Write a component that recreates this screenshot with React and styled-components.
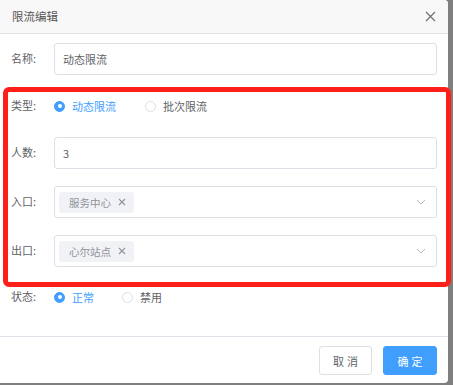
import React from "react";
import styled, { createGlobalStyle } from "styled-components";

const Global = createGlobalStyle`
  html, body { margin: 0; padding: 0; }
  body {
    background: #7f7f7f;
    font-family: "Noto Sans CJK SC", "Noto Sans", sans-serif;
    width: 453px;
    height: 385px;
    overflow: hidden;
  }
`;

const Dialog = styled.div`
  position: relative;
  width: 448px;
  height: 383px;
  background: #fff;
  border-radius: 0 4px 4px 0;
  display: flex;
  flex-direction: column;
  box-sizing: border-box;
`;

const Header = styled.div`
  height: 34px;
  box-sizing: border-box;
  background: #f8f8f8;
  border-bottom: 1px solid #e2e2ea;
  border-radius: 0 4px 0 0;
  padding: 0 12px 0 12px;
  display: flex;
  align-items: center;
  justify-content: space-between;
`;

const Title = styled.div`
  font-size: 11.5px;
  color: #555;
  line-height: 1;
`;

const Close = styled.svg`
  width: 11px;
  height: 11px;
`;

const Body = styled.div`
  padding: 9px 11px 0 11px;
  display: flex;
  flex-direction: column;
`;

const Item = styled.div`
  display: flex;
  align-items: center;
  height: ${(p) => p.$h || 32}px;
  margin-bottom: ${(p) => (p.$mb === undefined ? 17 : p.$mb)}px;
`;

const Label = styled.div`
  width: 43px;
  flex: none;
  font-size: 11px;
  color: #606266;
  margin-top: -3px;
`;

const Input = styled.div`
  flex: 1;
  height: 32px;
  box-sizing: border-box;
  border: 1px solid #dcdfe6;
  border-radius: 3px;
  padding: 0 8px;
  display: flex;
  align-items: center;
  font-size: 11px;
  color: #606266;
`;

const Select = styled(Input)`
  padding: 0 10px 0 4px;
  justify-content: space-between;
`;

const Tag = styled.span`
  display: inline-flex;
  align-items: center;
  height: 21px;
  padding: 0 8px 0 10px;
  background: #f0f2f5;
  border-radius: 3px;
  font-size: 10.5px;
  color: #909399;
  gap: 7px;
`;

const Radio = styled.label`
  display: inline-flex;
  align-items: center;
  margin-right: ${(p) => p.$mr || 0}px;
  font-size: 11px;
  color: ${(p) => (p.$on ? "#409eff" : "#606266")};
`;

const Dot = styled.span`
  width: 11px;
  height: 11px;
  box-sizing: border-box;
  border-radius: 50%;
  border: 1px solid ${(p) => (p.$on ? "#409eff" : "#dcdfe6")};
  background: ${(p) => (p.$on ? "#409eff" : "#fff")};
  display: inline-flex;
  align-items: center;
  justify-content: center;
  margin-right: 7px;
  &::after {
    content: "";
    width: 4px;
    height: 4px;
    border-radius: 50%;
    background: #fff;
    display: ${(p) => (p.$on ? "block" : "none")};
  }
`;

const Footer = styled.div`
  margin-top: auto;
  border-top: 1px solid #e2e2ea;
  height: 47px;
  box-sizing: border-box;
  padding: 9px 11px 0 0;
  display: flex;
  justify-content: flex-end;
  align-items: flex-start;
  gap: 11px;
`;

const Button = styled.button`
  width: ${(p) => p.$w}px;
  height: 29px;
  box-sizing: border-box;
  border-radius: 3px;
  font-family: inherit;
  font-size: 11px;
  letter-spacing: 3px;
  padding: 0 0 0 3px;
  border: 1px solid ${(p) => (p.$primary ? "#409eff" : "#dcdfe6")};
  background: ${(p) => (p.$primary ? "#409eff" : "#fff")};
  color: ${(p) => (p.$primary ? "#fff" : "#606266")};
`;

const Highlight = styled.div`
  position: absolute;
  left: 3px;
  top: 87px;
  width: 448px;
  height: 200px;
  box-sizing: border-box;
  border: 5px solid #ff1f1a;
  border-radius: 6px;
  pointer-events: none;
`;

const Chevron = () => (
  <svg width="10" height="6" viewBox="0 0 10 6">
    <path d="M1 1 L5 5 L9 1" fill="none" stroke="#b4b7bd" strokeWidth="1" />
  </svg>
);

const TagX = () => (
  <svg width="8" height="8" viewBox="0 0 8 8">
    <path d="M1 1 L7 7 M7 1 L1 7" stroke="#909399" strokeWidth="1.1" />
  </svg>
);

export default function App() {
  return (
    <>
      <Global />
      <Dialog>
        <Header>
          <Title>限流编辑</Title>
          <Close viewBox="0 0 11 11">
            <path d="M1 1 L10 10 M10 1 L1 10" stroke="#6f6f6f" strokeWidth="1.2" />
          </Close>
        </Header>
        <Body>
          <Item $mb={18}>
            <Label>名称:</Label>
            <Input>动态限流</Input>
          </Item>
          <Item $h={26} $mb={18}>
            <Label>类型:</Label>
            <Radio $on $mr={29}>
              <Dot $on />
              动态限流
            </Radio>
            <Radio>
              <Dot />
              批次限流
            </Radio>
          </Item>
          <Item>
            <Label>人数:</Label>
            <Input>3</Input>
          </Item>
          <Item>
            <Label>入口:</Label>
            <Select>
              <Tag>
                服务中心
                <TagX />
              </Tag>
              <Chevron />
            </Select>
          </Item>
          <Item>
            <Label>出口:</Label>
            <Select>
              <Tag>
                心尔站点
                <TagX />
              </Tag>
              <Chevron />
            </Select>
          </Item>
          <Item $h={26} $mb={0}>
            <Label>状态:</Label>
            <Radio $on $mr={28}>
              <Dot $on />
              正常
            </Radio>
            <Radio>
              <Dot />
              禁用
            </Radio>
          </Item>
        </Body>
        <Footer>
          <Button $w={53}>取消</Button>
          <Button $w={54} $primary>确定</Button>
        </Footer>
        <Highlight />
      </Dialog>
    </>
  );
}
